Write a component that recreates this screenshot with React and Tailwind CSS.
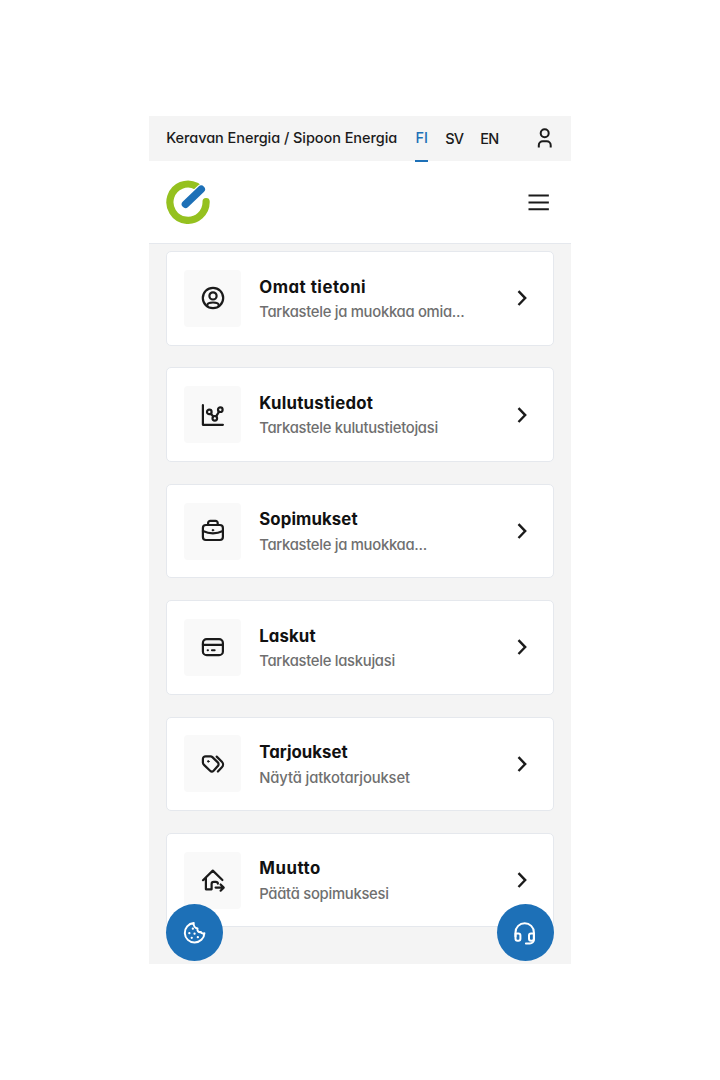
import React from 'react';

function Icon({ children, className = 'size-7' }) {
  return (
    <svg viewBox="0 0 28 28" className={className} fill="none" stroke="currentColor" strokeWidth="2.200" strokeLinecap="round" strokeLinejoin="round" aria-hidden="true">
      {children}
    </svg>
  );
}

const icons = {
  profile: (
    <Icon>
      <circle cx="14" cy="14" r="10.200" />
      <circle cx="14" cy="11.900" r="3.600" />
      <path d="M8.200 22v-.5c0-1.900 2.600-3 5.800-3s5.800 1.100 5.800 3v.5" />
    </Icon>
  ),
  chart: (
    <Icon>
      <path d="M3.900 4.200V23.800h20" />
      <circle cx="10.300" cy="10.900" r="2.300" />
      <circle cx="15.800" cy="17.300" r="2.300" />
      <circle cx="21.300" cy="8.700" r="2.300" />
      <path d="m11.800 12.800 2.600 2.800M17.100 15.300l3-4.700" />
    </Icon>
  ),
  briefcase: (
    <Icon>
      <rect x="3.900" y="8" width="20" height="15" rx="3" />
      <path d="M9.100 7.700V6A2.200 2.200 0 0 1 11.300 3.800h5.200a2.200 2.200 0 0 1 2.200 2.200v1.700M3.900 14c6 2.800 14 2.800 20 0" />
      <circle cx="13.900" cy="13.200" r="0.900" fill="currentColor" strokeWidth="0.600" />
    </Icon>
  ),
  card: (
    <Icon>
      <rect x="3.900" y="6.200" width="20" height="16" rx="3.800" />
      <path d="M3.900 11.800h20" />
      <path d="M8.600 17.300h.4M12.900 17.300h2.800" strokeWidth="1.900" />
    </Icon>
  ),
  tags: (
    <Icon>
      <path d="M3.900 12.500V9A2.700 2.700 0 0 1 6.600 6.300h5c.7 0 1.300.3 1.800.8l5.400 5.300a2.600 2.600 0 0 1 0 3.700l-4.200 4.700a2.500 2.500 0 0 1-3.500 0L5 14.900a3 3 0 0 1-1.100-2.400Z" />
      <path d="m17.700 6.600 5.200 5.200a3.900 3.900 0 0 1 0 5.500l-4 4.200" />
      <circle cx="9.300" cy="11.400" r="0.800" fill="currentColor" strokeWidth="1" />
    </Icon>
  ),
  move: (
    <Icon>
      <path d="m4 14.200 9.800-9.600 9.600 9.400M6.900 12v11.300h5.700V18c0-1.400.8-2.200 2.200-2.200h2c1.200 0 2 .6 2.100 1.800" />
      <path d="M16.600 21.600h8M21.600 18.500l3.100 3.100-3.100 3.100" />
    </Icon>
  ),
};

const items = [
  { icon: 'profile', title: 'Omat tietoni', text: 'Tarkastele ja muokkaa omia...', tracking: 'tracking-[0.500px]' },
  { icon: 'chart', title: 'Kulutustiedot', text: 'Tarkastele kulutustietojasi', tracking: 'tracking-[0.250px]' },
  { icon: 'briefcase', title: 'Sopimukset', text: 'Tarkastele ja muokkaa...', tracking: 'tracking-[0.100px]' },
  { icon: 'card', title: 'Laskut', text: 'Tarkastele laskujasi', tracking: 'tracking-[0.100px]' },
  { icon: 'tags', title: 'Tarjoukset', text: 'Näytä jatkotarjoukset', tracking: 'tracking-[0.040px]', textTracking: 'tracking-[-0.130px]' },
  { icon: 'move', title: 'Muutto', text: 'Päätä sopimuksesi', tracking: 'tracking-[0.550px]' },
];

function MenuCard({ icon, title, text, tracking, textTracking = 'tracking-[-0.280px]' }) {
  return (
    <a className="flex h-[94.500px] shrink-0 items-center rounded-[5px] border border-[#e5e8ed] bg-white pl-[17px] pr-[17px]">
      <span className="flex size-[57px] shrink-0 items-center justify-center rounded-[4px] bg-[#f9f9f9]">{icons[icon]}</span>
      <span className="ml-[18px] min-w-0 flex-1 pt-[3px] whitespace-nowrap">
        <span className={`block text-[16.800px] font-bold leading-[25px] text-[#111] ${tracking}`}>{title}</span>
        <span className={`block pt-[0.500px] text-[14.800px] font-medium leading-[25px] text-[#6f6f6f] ${textTracking}`}>{text}</span>
      </span>
      <Icon>
        <path d="m10.500 7.200 6.700 6.900-6.700 6.900" strokeWidth="2.400" strokeLinecap="butt" strokeLinejoin="miter" />
      </Icon>
    </a>
  );
}

export default function App() {
  return (
    <div className="flex h-[1080px] w-[720px] justify-center bg-white pt-[116px] text-[#1b1b1b] font-['Inter','Liberation_Sans',sans-serif] [font-feature-settings:'cv11'_1]">
      <main className="relative flex h-[848px] w-[422.500px] flex-col bg-[#f4f4f4]">
        <div className="relative z-10 flex h-[45px] shrink-0 items-center pl-[17.500px] pr-[12px] text-[14.500px] font-medium whitespace-nowrap">
          <span className="w-[249px] pb-px tracking-[-0.060px]">Keravan Energia / Sipoon Energia</span>
          <nav className="flex h-full items-center gap-[17px]">
            <a className="mt-[2px] flex h-[45px] w-[13px] shrink-0 items-center justify-center border-b-2 border-[#1d70b7] pb-px text-[#1d70b7]">FI</a>
            <a className="w-[18px] tracking-[-0.900px]">SV</a>
            <a className="w-[20px] tracking-[-0.700px]">EN</a>
          </nav>
          <span className="ml-auto">
            <Icon>
              <circle cx="13.700" cy="8.300" r="4" strokeWidth="2" />
              <path d="M7.800 22.500v-2.300a4 4 0 0 1 4-4h3.900a4 4 0 0 1 4 4v2.300" strokeWidth="2" strokeLinecap="butt" />
            </Icon>
          </span>
        </div>
        <header className="flex h-[83px] shrink-0 items-center justify-between border-b border-[#e5e8ed] bg-white pl-[17.500px] pr-[17px]">
          <svg viewBox="0 0 44 44" className="size-[44px]" fill="none" strokeLinecap="round" aria-hidden="true">
            <path d="M30.500 6.200A18.100 18.100 0 1 0 40.100 21.500" stroke="#95c11f" strokeWidth="7.200" />
            <path d="M19.500 24.200 35.200 9.300" stroke="#fff" strokeWidth="10" />
            <path d="M19.500 24.200 35.200 9.300" stroke="#1d70b7" strokeWidth="7.600" />
          </svg>
          <Icon className="size-[30px]">
            <path d="M4.200 8h19M4.200 14.400h19M4.200 20.700h19" strokeWidth="1.950" strokeLinecap="butt" />
          </Icon>
        </header>
        <div className="flex flex-col gap-[21.900px] px-[17.500px] pt-[7px]">
          {items.map((item) => <MenuCard key={item.title} {...item} />)}
        </div>
        <button className="absolute bottom-[3px] left-[17.500px] flex size-[57px] items-center justify-center rounded-full bg-[#1d70b7] text-white">
          <Icon>
            <path d="M13 4a9.800 9.800 0 1 0 10.700 10.200c-1.400.6-2.900.2-3.500-1.200-2.400.6-4.200-1.400-3.400-3.500-2.300-.5-4.200-2.800-3.800-5.500Z" transform="translate(-.3 0)" strokeWidth="2" />
            <path d="M11.800 9.700h.1M8.300 14.200h.1M13.500 14.700h.1M10.700 18.800h.1M16.800 18.200h.1" />
          </Icon>
        </button>
        <button className="absolute bottom-[3px] right-[17.500px] flex size-[57px] items-center justify-center rounded-full bg-[#1d70b7] text-white">
          <Icon>
            <path d="M4.500 17.500v-4.100a9.200 9.200 0 0 1 18.400 0v7a4 4 0 0 1-4 4h-4" strokeWidth="2" />
            <path d="M4.500 14.500h2.900a2 2 0 0 1 2 2v3.200a2 2 0 0 1-2 2h-.9a2 2 0 0 1-2-2ZM22.900 14.500H20a2 2 0 0 0-2 2v3.200a2 2 0 0 0 2 2h.9a2 2 0 0 0 2-2Z" strokeWidth="2" />
          </Icon>
        </button>
      </main>
    </div>
  );
}
